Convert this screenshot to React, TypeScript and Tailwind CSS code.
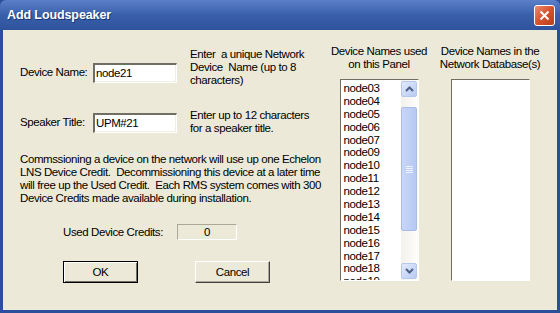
const nodes = [
  "node03", "node04", "node05", "node06", "node07", "node09", "node10", "node11",
  "node12", "node13", "node14", "node15", "node16", "node17", "node18", "node19",
];

function ScrollArrow({ up }: { up?: boolean }) {
  return (
    <div className="flex h-[16px] w-[16px] items-center justify-center rounded-[2px] border border-[#b7c8ef] bg-gradient-to-br from-[#e1e9fd] to-[#b9cbf3]">
      <svg width="9" height="6" viewBox="0 0 9 6">
        <path
          d={up ? "M1 5 L4.5 1.5 L8 5" : "M1 1 L4.5 4.5 L8 1"}
          fill="none"
          stroke="#4d6185"
          strokeWidth="2"
        />
      </svg>
    </div>
  );
}

function SunkenInput({ value }: { value: string }) {
  return (
    <div className="flex h-[20px] w-[84px] items-center border-t-2 border-l-2 border-b border-r border-t-[#716f64] border-l-[#716f64] border-b-white border-r-white bg-white pl-[1px] shadow-[inset_-1px_-1px_0_#f1efe2]">
      {value}
    </div>
  );
}

export default function App() {
  return (
    <div className="flex h-[313px] w-[560px] flex-col bg-[#2c4f9b] font-['Liberation_Sans',Arial,sans-serif] text-[11.5px] leading-[13px] tracking-[-0.4px] text-black">
      {/* Title bar */}
      <div className="flex h-[30px] shrink-0 items-center justify-between rounded-t-[6px] bg-gradient-to-b from-[#5b80c8] via-[#3a60ab] to-[#2f529c] pl-[7px] pr-[5px]">
        <span className="text-[12.5px] font-bold tracking-[-0.1px] text-white [text-shadow:1px_1px_0_#1a3570]">
          Add Loudspeaker
        </span>
        <div className="flex h-[21px] w-[21px] items-center justify-center rounded-[3px] border border-white bg-gradient-to-br from-[#e88a6d] via-[#d6512c] to-[#b8401e]">
          <svg width="11" height="11" viewBox="0 0 11 11">
            <path d="M1.5 1.5 L9.5 9.5 M9.5 1.5 L1.5 9.5" stroke="white" strokeWidth="2" />
          </svg>
        </div>
      </div>

      {/* Body */}
      <div className="mx-[3px] mb-[3px] flex flex-1 bg-[#ece9d8]">
        {/* Left part */}
        <div className="flex w-[326px] flex-col pl-[17px]">
          <div className="mt-[18px] flex">
            <div className="mt-[10px] flex items-center">
              <span className="w-[73px] whitespace-nowrap">Device Name:</span>
              <SunkenInput value="node21" />
            </div>
            <p className="ml-[13px] w-[130px]">
              Enter&nbsp; a unique Network Device&nbsp; Name (up to 8 characters)
            </p>
          </div>

          <div className="mt-[22px] flex">
            <div className="mt-[1px] flex items-center">
              <span className="w-[73px] whitespace-nowrap">Speaker Title:</span>
              <SunkenInput value="UPM#21" />
            </div>
            <p className="ml-[13px] w-[130px]">
              Enter up to 12 characters for a speaker title.
            </p>
          </div>

          <p className="mt-[18px] w-[306px]">
            Commssioning a device on the network will use up one Echelon LNS Device Credit.&nbsp; Decommissioning this device at a later time will free up the Used Credit.&nbsp; Each RMS system comes with 300 Device Credits made available during installation.
          </p>

          <div className="mt-[19px] flex items-center pl-[43px]">
            <span className="w-[114px] whitespace-nowrap">Used Device Credits:</span>
            <div className="flex h-[16px] w-[60px] items-center justify-center border border-t-[#aca899] border-l-[#aca899] border-b-white border-r-white">
              0
            </div>
          </div>

          <div className="mt-[21px] flex pl-[43px]">
            <button className="h-[22px] w-[75px] border border-black bg-[#ece9d8] shadow-[inset_1px_1px_0_white,inset_-1px_-1px_0_#716f64]">
              OK
            </button>
            <button className="ml-[57px] h-[22px] w-[75px] border border-t-white border-l-white border-b-[#404040] border-r-[#404040] bg-[#ece9d8] shadow-[inset_-1px_-1px_0_#aca899]">
              Cancel
            </button>
          </div>
        </div>

        {/* Right part */}
        <div className="mt-[15px] flex gap-[11px]">
          <div className="flex w-[100px] flex-col items-center">
            <p className="whitespace-nowrap text-center">Device Names used<br />on this Panel</p>
            <div className="mt-[8px] flex h-[202px] w-[79px] border border-t-[#716f64] border-l-[#716f64] border-b-white border-r-white bg-white">
              <div className="flex-1 overflow-hidden pl-[3px] pt-[2px]">
                {nodes.map((n) => (
                  <div key={n} className="h-[12.9px] leading-[13px]">{n}</div>
                ))}
              </div>
              <div className="flex w-[17px] flex-col items-center bg-gradient-to-r from-[#f3f1ec] to-[#fdfdfa] py-[1px]">
                <ScrollArrow up />
                <div className="mt-[10px] flex h-[124px] w-[16px] items-center justify-center rounded-[2px] border border-[#a9bce6] bg-gradient-to-r from-[#c8d6f8] to-[#b6c9f3]">
                  <svg width="7" height="8" viewBox="0 0 7 8">
                    <path d="M0 1.5 H7 M0 3.5 H7 M0 5.5 H7 M0 7.5 H7" stroke="#eef3fe" strokeWidth="1" />
                  </svg>
                </div>
                <div className="flex-1" />
                <ScrollArrow />
              </div>
            </div>
          </div>

          <div className="flex w-[100px] flex-col items-center">
            <p className="whitespace-nowrap text-center">Device Names in the<br />Network Database(s)</p>
            <div className="mt-[8px] h-[202px] w-[79px] border border-t-[#716f64] border-l-[#716f64] border-b-white border-r-white bg-white" />
          </div>
        </div>
      </div>
    </div>
  );
}
